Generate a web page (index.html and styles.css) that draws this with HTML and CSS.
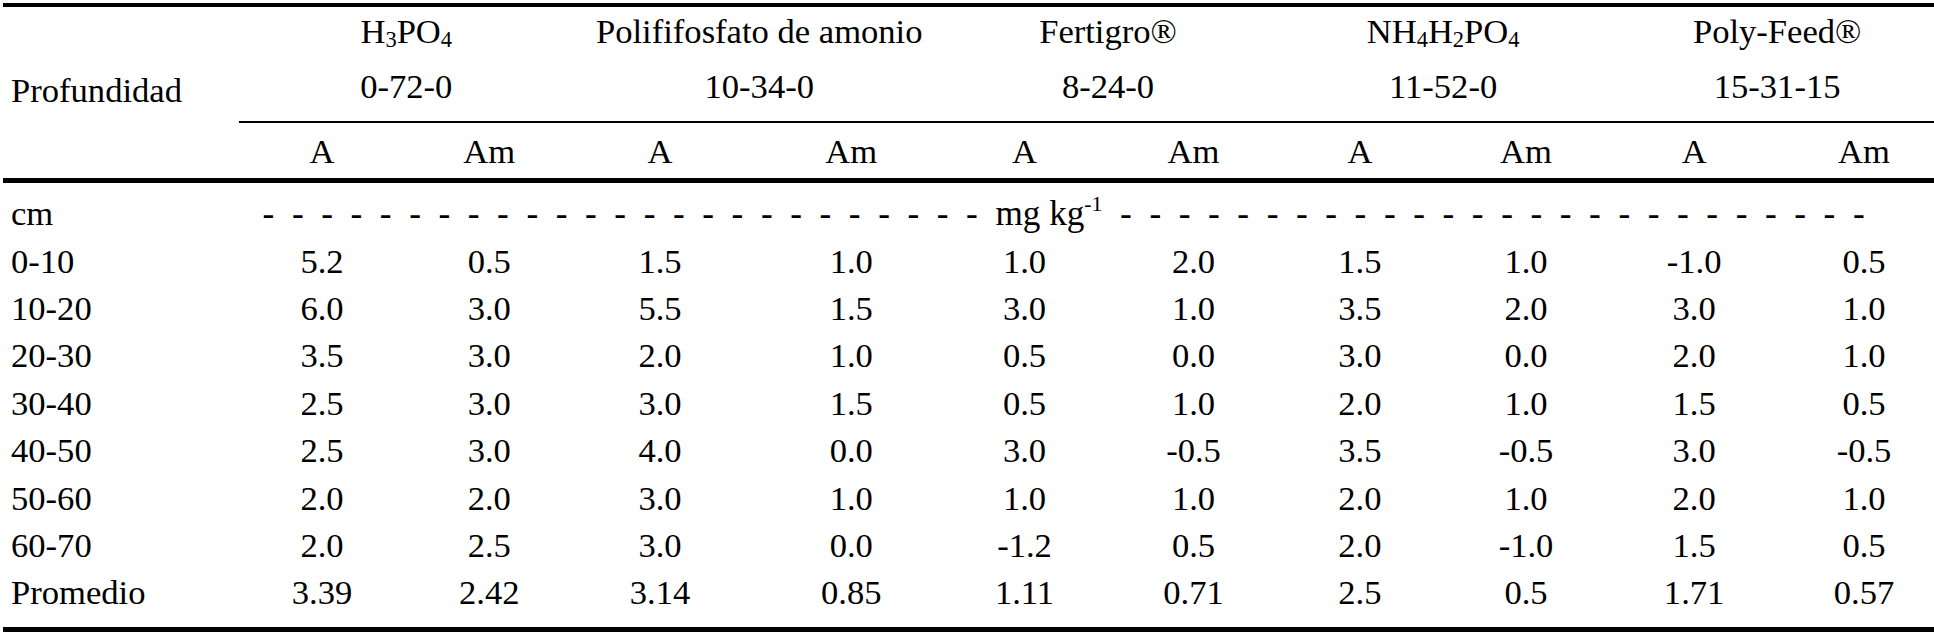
FILE: index.html
```html
<!DOCTYPE html>
<html lang="es">
<head>
<meta charset="utf-8">
<title>Tabla</title>
<link rel="stylesheet" href="styles.css">
</head>
<body>
<div class="tbl">
  <div class="thead">
    <div class="row groups">
      <div class="lab"></div>
      <div class="grp">H<sub>3</sub>PO<sub>4</sub></div>
      <div class="grp">Polififosfato de amonio</div>
      <div class="grp">Fertigro®</div>
      <div class="grp">NH<sub>4</sub>H<sub>2</sub>PO<sub>4</sub></div>
      <div class="grp">Poly-Feed®</div>
    </div>
    <div class="row groups codes">
      <div class="lab prof">Profundidad</div>
      <div class="grp">0-72-0</div>
      <div class="grp">10-34-0</div>
      <div class="grp">8-24-0</div>
      <div class="grp">11-52-0</div>
      <div class="grp">15-31-15</div>
    </div>
    <div class="row subs">
      <div class="lab"></div>
      <div>A</div><div>Am</div><div>A</div><div>Am</div><div>A</div><div>Am</div><div>A</div><div>Am</div><div>A</div><div>Am</div>
    </div>
  </div>
  <div class="tbody">
    <div class="row unit">
      <div class="lab">cm</div>
      <div class="dashes">-  -  -  -  -  -  -  -  -  -  -  -  -  -  -  -  -  -  -  -  -  -  -  -  -  mg kg<sup>-1</sup>  -  -  -  -  -  -  -  -  -  -  -  -  -  -  -  -  -  -  -  -  -  -  -  -  -  -</div>
    </div>
    <div class="row data"><div class="lab">0-10</div><div>5.2</div><div>0.5</div><div>1.5</div><div>1.0</div><div>1.0</div><div>2.0</div><div>1.5</div><div>1.0</div><div>-1.0</div><div>0.5</div></div>
    <div class="row data"><div class="lab">10-20</div><div>6.0</div><div>3.0</div><div>5.5</div><div>1.5</div><div>3.0</div><div>1.0</div><div>3.5</div><div>2.0</div><div>3.0</div><div>1.0</div></div>
    <div class="row data"><div class="lab">20-30</div><div>3.5</div><div>3.0</div><div>2.0</div><div>1.0</div><div>0.5</div><div>0.0</div><div>3.0</div><div>0.0</div><div>2.0</div><div>1.0</div></div>
    <div class="row data"><div class="lab">30-40</div><div>2.5</div><div>3.0</div><div>3.0</div><div>1.5</div><div>0.5</div><div>1.0</div><div>2.0</div><div>1.0</div><div>1.5</div><div>0.5</div></div>
    <div class="row data"><div class="lab">40-50</div><div>2.5</div><div>3.0</div><div>4.0</div><div>0.0</div><div>3.0</div><div>-0.5</div><div>3.5</div><div>-0.5</div><div>3.0</div><div>-0.5</div></div>
    <div class="row data"><div class="lab">50-60</div><div>2.0</div><div>2.0</div><div>3.0</div><div>1.0</div><div>1.0</div><div>1.0</div><div>2.0</div><div>1.0</div><div>2.0</div><div>1.0</div></div>
    <div class="row data"><div class="lab">60-70</div><div>2.0</div><div>2.5</div><div>3.0</div><div>0.0</div><div>-1.2</div><div>0.5</div><div>2.0</div><div>-1.0</div><div>1.5</div><div>0.5</div></div>
    <div class="row data"><div class="lab">Promedio</div><div>3.39</div><div>2.42</div><div>3.14</div><div>0.85</div><div>1.11</div><div>0.71</div><div>2.5</div><div>0.5</div><div>1.71</div><div>0.57</div></div>
  </div>
</div>
</body>
</html>
```
FILE: styles.css
```css
html, body {
  margin: 0;
  padding: 0;
  background: #fff;
  overflow: hidden;
}

body {
  font-family: "Liberation Serif", "Times New Roman", serif;
  font-size: 34.6px;
  color: #000;
}

.tbl {
  margin: 3px 0 0 3px;
  width: 1931px;
  border-top: 4px solid #000;
  border-bottom: 5px solid #000;
}

.row {
  display: grid;
  grid-template-columns: 236px 166px 168.5px 182px 183.5px 171px 167px 165.75px 166.5px 169.75px 155px;
  text-align: center;
  white-space: nowrap;
}

.row .lab {
  text-align: left;
  padding-left: 8px;
}

/* group header rows */
.groups {
  line-height: 49px;
}
.groups .grp {
  grid-column: span 2;
}
.groups .grp:nth-child(3) { padding-left: 6px; }
.groups .grp:nth-child(6) { padding-left: 11px; }

.codes .grp {
  padding-top: 6px;
  padding-bottom: 9.5px;
  border-bottom: 2px solid #000;
}
.codes .prof {
  padding-top: 9.5px;
}

sub {
  font-size: 0.65em;
  vertical-align: -0.2em;
  line-height: 0;
}

sup {
  font-size: 0.62em;
  vertical-align: 14px;
  line-height: 0;
}

/* A / Am row */
.thead {
  border-bottom: 5px solid #000;
}
.subs {
  line-height: 49px;
  padding-top: 4.6px;
  padding-bottom: 2.2px;
}

/* nudges to match column centres */
.subs > :nth-child(4), .data > :nth-child(4) { padding-right: 9px; }
.subs > :nth-child(5), .data > :nth-child(5) { padding-left: 8px; }
.subs > :nth-child(11), .data > :nth-child(11) { padding-left: 15px; }

/* body */
.tbody {
  padding-top: 6.9px;
  padding-bottom: 9.8px;
}
.tbody .row {
  line-height: 47.4px;
}
.dashes {
  grid-column: 2 / -1;
  text-align: left;
  white-space: pre;
  font-size: 35.2px;
  padding-left: 23.6px;
}
```
